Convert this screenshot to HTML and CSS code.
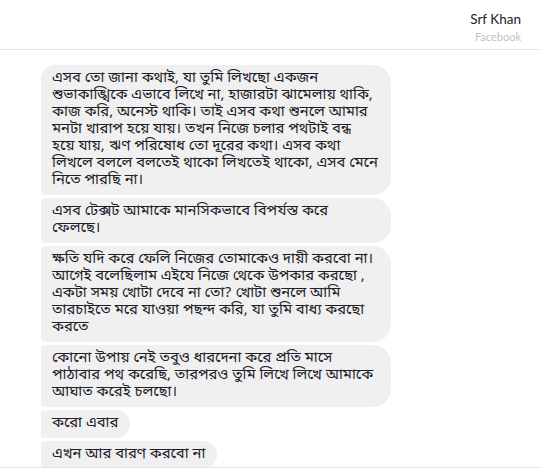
FILE: index.html
```html
<!DOCTYPE html>
<html lang="bn">
<head>
<meta charset="utf-8">
<title>Srf Khan</title>
<link rel="stylesheet" href="styles.css">
</head>
<body>
<div class="page">
  <header class="header">
    <div class="who">
      <div class="name">Srf Khan</div>
      <div class="source">Facebook</div>
    </div>
  </header>
  <main class="thread">
    <div class="msg wide first">এসব তো জানা কথাই, যা তুমি লিখছো একজন<br>শুভাকাঙ্খিকে এভাবে লিখে না, হাজারটা ঝামেলায় থাকি,<br>কাজ করি, অনেস্ট থাকি। তাই এসব কথা শুনলে আমার<br>মনটা খারাপ হয়ে যায়। তখন নিজে চলার পথটাই বন্ধ<br>হয়ে যায়, ঋণ পরিষোধ তো দূরের কথা। এসব কথা<br>লিখলে বললে বলতেই থাকো লিখতেই থাকো, এসব মেনে<br>নিতে পারছি না।</div>
    <div class="msg wide">এসব টেক্সট আমাকে মানসিকভাবে বিপর্যস্ত করে<br>ফেলছে।</div>
    <div class="msg wide">ক্ষতি যদি করে ফেলি নিজের তোমাকেও দায়ী করবো না।<br>আগেই বলেছিলাম এইযে নিজে থেকে উপকার করছো ,<br>একটা সময় খোটা দেবে না তো? খোটা শুনলে আমি<br>তারচাইতে মরে যাওয়া পছন্দ করি, যা তুমি বাধ্য করছো<br>করতে</div>
    <div class="msg wide">কোনো উপায় নেই তবুও ধারদেনা করে প্রতি মাসে<br>পাঠাবার পথ করেছি, তারপরও তুমি লিখে লিখে আমাকে<br>আঘাত করেই চলছো।</div>
    <div class="msg">করো এবার</div>
    <div class="msg">এখন আর বারণ করবো না</div>
  </main>
  <footer class="composer"></footer>
</div>
</body>
</html>
```
FILE: styles.css
```css
html, body {
  margin: 0;
  padding: 0;
  background: #ffffff;
}
.page {
  width: 540px;
  height: 472px;
  display: flex;
  flex-direction: column;
  overflow: hidden;
  font-family: "Noto Sans Bengali", "Lohit Bengali", "Noto Sans", "Open Sans", sans-serif;
  color: #1d2129;
}
.header {
  height: 50px;
  flex: none;
  box-sizing: border-box;
  border-bottom: 1px solid #e5e5e5;
  display: flex;
  justify-content: flex-end;
  padding: 10px 19px 0 0;
}
.who {
  display: flex;
  flex-direction: column;
  align-items: flex-end;
}
.name {
  font-family: Lato, "Open Sans", sans-serif;
  font-size: 13.5px;
  line-height: 18px;
  color: #1d2129;
}
.source {
  font-family: Lato, "Open Sans", sans-serif;
  font-size: 11px;
  line-height: 15px;
  margin-top: 1px;
  color: #bec2c9;
}
.thread {
  flex: 1;
  display: flex;
  flex-direction: column;
  align-items: flex-start;
  gap: 3px;
  padding: 15px 0 0 41px;
  overflow: hidden;
}
.msg {
  flex: none;
  background: #f1f0f0;
  border-radius: 4px 18px 18px 4px;
  padding: 5px 12px 6px 11px;
  font-size: 14.8px;
  line-height: 17px;
  white-space: nowrap;
}
.msg.wide {
  width: 327px;
}
.msg.first {
  border-top-left-radius: 14px;
}
.composer {
  height: 4px;
  flex: none;
  border-top: 1px solid #e5e5e5;
  background: #ffffff;
}
```
